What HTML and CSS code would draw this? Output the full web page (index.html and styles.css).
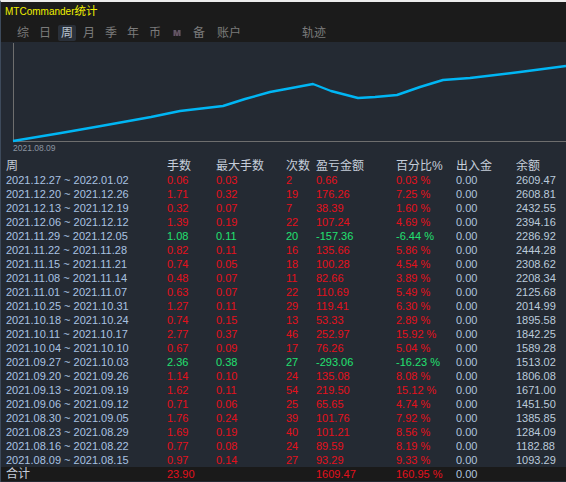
FILE: index.html
```html
<!DOCTYPE html>
<html>
<head>
    <title>MTCommander统计</title>
    <link rel="stylesheet" href="styles.css">
</head>
<body>
    <div class="head">
        <div class="title">MTCommander<span class="cjk">统计</span></div>
        <div class="tabs">
            <span class="tab">综</span>
            <span class="tab">日</span>
            <span class="tab active">周</span>
            <span class="tab">月</span>
            <span class="tab">季</span>
            <span class="tab">年</span>
            <span class="tab">币</span>
            <span class="tab mt">M</span>
            <span class="tab">备</span>
            <span class="tab wide">账户</span>
            <span class="tab wide far">轨迹</span>
        </div>
    </div>

    <div class="chart">
        <svg width="565" height="117" viewBox="0 0 565 117">
            <line x1="12.5" y1="1" x2="12.5" y2="99" stroke="#6e6e6e" stroke-width="1"/>
            <line x1="12" y1="99.5" x2="565" y2="99.5" stroke="#6e6e6e" stroke-width="1"/>
            <polyline fill="none" stroke="#00b6f4" stroke-width="2.4" stroke-linejoin="round"
                points="12,99 60,91 100,84 150,75 179,69 222,64 244,57 269,50 296,45 312,42 330,49 357,56 374,55 396,53 419,45 442,38 469,36 519,30 565,24"/>
            <text x="12" y="109" class="axis-label">2021.08.09</text>
        </svg>
    </div>

    <table class="stats">
        <colgroup>
            <col style="width:166px">
            <col style="width:49px">
            <col style="width:70px">
            <col style="width:30px">
            <col style="width:80px">
            <col style="width:60px">
            <col style="width:60px">
            <col>
        </colgroup>
        <tr class="hdr"><td>周</td><td>手数</td><td>最大手数</td><td>次数</td><td>盈亏金额</td><td>百分比%</td><td>出入金</td><td>余额</td></tr>
        <tr><td>2021.12.27 ~ 2022.01.02</td><td class="up">0.06</td><td class="up">0.03</td><td class="up">2</td><td class="up">0.66</td><td class="up">0.03 %</td><td class="flow">0.00</td><td class="bal">2609.47</td></tr>
        <tr><td>2021.12.20 ~ 2021.12.26</td><td class="up">1.71</td><td class="up">0.32</td><td class="up">19</td><td class="up">176.26</td><td class="up">7.25 %</td><td class="flow">0.00</td><td class="bal">2608.81</td></tr>
        <tr><td>2021.12.13 ~ 2021.12.19</td><td class="up">0.32</td><td class="up">0.07</td><td class="up">7</td><td class="up">38.39</td><td class="up">1.60 %</td><td class="flow">0.00</td><td class="bal">2432.55</td></tr>
        <tr><td>2021.12.06 ~ 2021.12.12</td><td class="up">1.39</td><td class="up">0.19</td><td class="up">22</td><td class="up">107.24</td><td class="up">4.69 %</td><td class="flow">0.00</td><td class="bal">2394.16</td></tr>
        <tr><td>2021.11.29 ~ 2021.12.05</td><td class="down">1.08</td><td class="down">0.11</td><td class="down">20</td><td class="down">-157.36</td><td class="down">-6.44 %</td><td class="flow">0.00</td><td class="bal">2286.92</td></tr>
        <tr><td>2021.11.22 ~ 2021.11.28</td><td class="up">0.82</td><td class="up">0.11</td><td class="up">16</td><td class="up">135.66</td><td class="up">5.86 %</td><td class="flow">0.00</td><td class="bal">2444.28</td></tr>
        <tr><td>2021.11.15 ~ 2021.11.21</td><td class="up">0.74</td><td class="up">0.05</td><td class="up">18</td><td class="up">100.28</td><td class="up">4.54 %</td><td class="flow">0.00</td><td class="bal">2308.62</td></tr>
        <tr><td>2021.11.08 ~ 2021.11.14</td><td class="up">0.48</td><td class="up">0.07</td><td class="up">11</td><td class="up">82.66</td><td class="up">3.89 %</td><td class="flow">0.00</td><td class="bal">2208.34</td></tr>
        <tr><td>2021.11.01 ~ 2021.11.07</td><td class="up">0.63</td><td class="up">0.07</td><td class="up">22</td><td class="up">110.69</td><td class="up">5.49 %</td><td class="flow">0.00</td><td class="bal">2125.68</td></tr>
        <tr><td>2021.10.25 ~ 2021.10.31</td><td class="up">1.27</td><td class="up">0.11</td><td class="up">29</td><td class="up">119.41</td><td class="up">6.30 %</td><td class="flow">0.00</td><td class="bal">2014.99</td></tr>
        <tr><td>2021.10.18 ~ 2021.10.24</td><td class="up">0.74</td><td class="up">0.15</td><td class="up">13</td><td class="up">53.33</td><td class="up">2.89 %</td><td class="flow">0.00</td><td class="bal">1895.58</td></tr>
        <tr><td>2021.10.11 ~ 2021.10.17</td><td class="up">2.77</td><td class="up">0.37</td><td class="up">46</td><td class="up">252.97</td><td class="up">15.92 %</td><td class="flow">0.00</td><td class="bal">1842.25</td></tr>
        <tr><td>2021.10.04 ~ 2021.10.10</td><td class="up">0.67</td><td class="up">0.09</td><td class="up">17</td><td class="up">76.26</td><td class="up">5.04 %</td><td class="flow">0.00</td><td class="bal">1589.28</td></tr>
        <tr><td>2021.09.27 ~ 2021.10.03</td><td class="down">2.36</td><td class="down">0.38</td><td class="down">27</td><td class="down">-293.06</td><td class="down">-16.23 %</td><td class="flow">0.00</td><td class="bal">1513.02</td></tr>
        <tr><td>2021.09.20 ~ 2021.09.26</td><td class="up">1.14</td><td class="up">0.10</td><td class="up">24</td><td class="up">135.08</td><td class="up">8.08 %</td><td class="flow">0.00</td><td class="bal">1806.08</td></tr>
        <tr><td>2021.09.13 ~ 2021.09.19</td><td class="up">1.62</td><td class="up">0.11</td><td class="up">54</td><td class="up">219.50</td><td class="up">15.12 %</td><td class="flow">0.00</td><td class="bal">1671.00</td></tr>
        <tr><td>2021.09.06 ~ 2021.09.12</td><td class="up">0.71</td><td class="up">0.06</td><td class="up">25</td><td class="up">65.65</td><td class="up">4.74 %</td><td class="flow">0.00</td><td class="bal">1451.50</td></tr>
        <tr><td>2021.08.30 ~ 2021.09.05</td><td class="up">1.76</td><td class="up">0.24</td><td class="up">39</td><td class="up">101.76</td><td class="up">7.92 %</td><td class="flow">0.00</td><td class="bal">1385.85</td></tr>
        <tr><td>2021.08.23 ~ 2021.08.29</td><td class="up">1.69</td><td class="up">0.19</td><td class="up">40</td><td class="up">101.21</td><td class="up">8.56 %</td><td class="flow">0.00</td><td class="bal">1284.09</td></tr>
        <tr><td>2021.08.16 ~ 2021.08.22</td><td class="up">0.77</td><td class="up">0.08</td><td class="up">24</td><td class="up">89.59</td><td class="up">8.19 %</td><td class="flow">0.00</td><td class="bal">1182.88</td></tr>
        <tr><td>2021.08.09 ~ 2021.08.15</td><td class="up">0.97</td><td class="up">0.14</td><td class="up">27</td><td class="up">93.29</td><td class="up">9.33 %</td><td class="flow">0.00</td><td class="bal">1093.29</td></tr>
        <tr class="total"><td>合计</td><td class="up">23.90</td><td></td><td></td><td class="up">1609.47</td><td class="up">160.95 %</td><td class="flow">0.00</td><td></td></tr>
    </table>
</body>
</html>
```

FILE: styles.css
```css
body {
    margin: 0;
    height: 480px;
    overflow: hidden;
    background-color: #242a33;
    border-top: 2px solid #ececec;
    border-left: 1px solid #3d4a5b;
    font-family: "Liberation Sans", "Noto Sans CJK SC", sans-serif;
}

/* Kopfbereich mit Titel und Reitern */
.head {
    background-color: #1b1b1b;
    height: 40px;
}

.title {
    height: 19px;
    line-height: 19px;
    padding-left: 4px;
    font-size: 10px;
    color: #f0f000;
}

.title .cjk {
    font-size: 11.5px;
}

.tabs {
    display: flex;
    gap: 4px;
    padding-top: 4px;
    padding-left: 13px;
}

.tab {
    width: 18px;
    height: 16px;
    line-height: 16px;
    text-align: center;
    font-size: 12px;
    color: #7b7b7b;
    border-radius: 2px;
}

.tab.active {
    background-color: #2a3039;
    color: #bcc6d2;
}

.tab.mt {
    font-size: 9px;
    font-weight: bold;
    color: #5c5c66;
    text-shadow: -0.6px 0 #7a3030, 0.6px 0 #30407a;
}

.tab.wide {
    width: 34px;
}

.tab.far {
    width: 30px;
    margin-left: 49px;
}

/* Diagramm */
.chart {
    height: 117px;
}

.chart svg {
    display: block;
}

.axis-label {
    font-family: "Liberation Sans", sans-serif;
    font-size: 8.5px;
    fill: #8a93a0;
}

/* Tabelle */
.stats {
    width: 565px;
    table-layout: fixed;
    border-collapse: collapse;
    font-size: 11px;
}

.stats td {
    height: 14px;
    line-height: 14px;
    padding: 0;
    white-space: nowrap;
    overflow: hidden;
    color: #a9c2e2;
}

.stats td:first-child {
    padding-left: 5px;
}

.stats .hdr td {
    font-size: 12px;
    color: #c6ceda;
}

.stats td.up {
    color: #e4101c;
}

.stats td.down {
    color: #22e070;
}

.stats td.flow {
    color: #b0c4de;
}

.stats td.bal {
    color: #bccadb;
}

.stats .total td {
    background-color: #1a1a1a;
}

.stats .total td:first-child {
    font-size: 12px;
    color: #c6ceda;
}
```
